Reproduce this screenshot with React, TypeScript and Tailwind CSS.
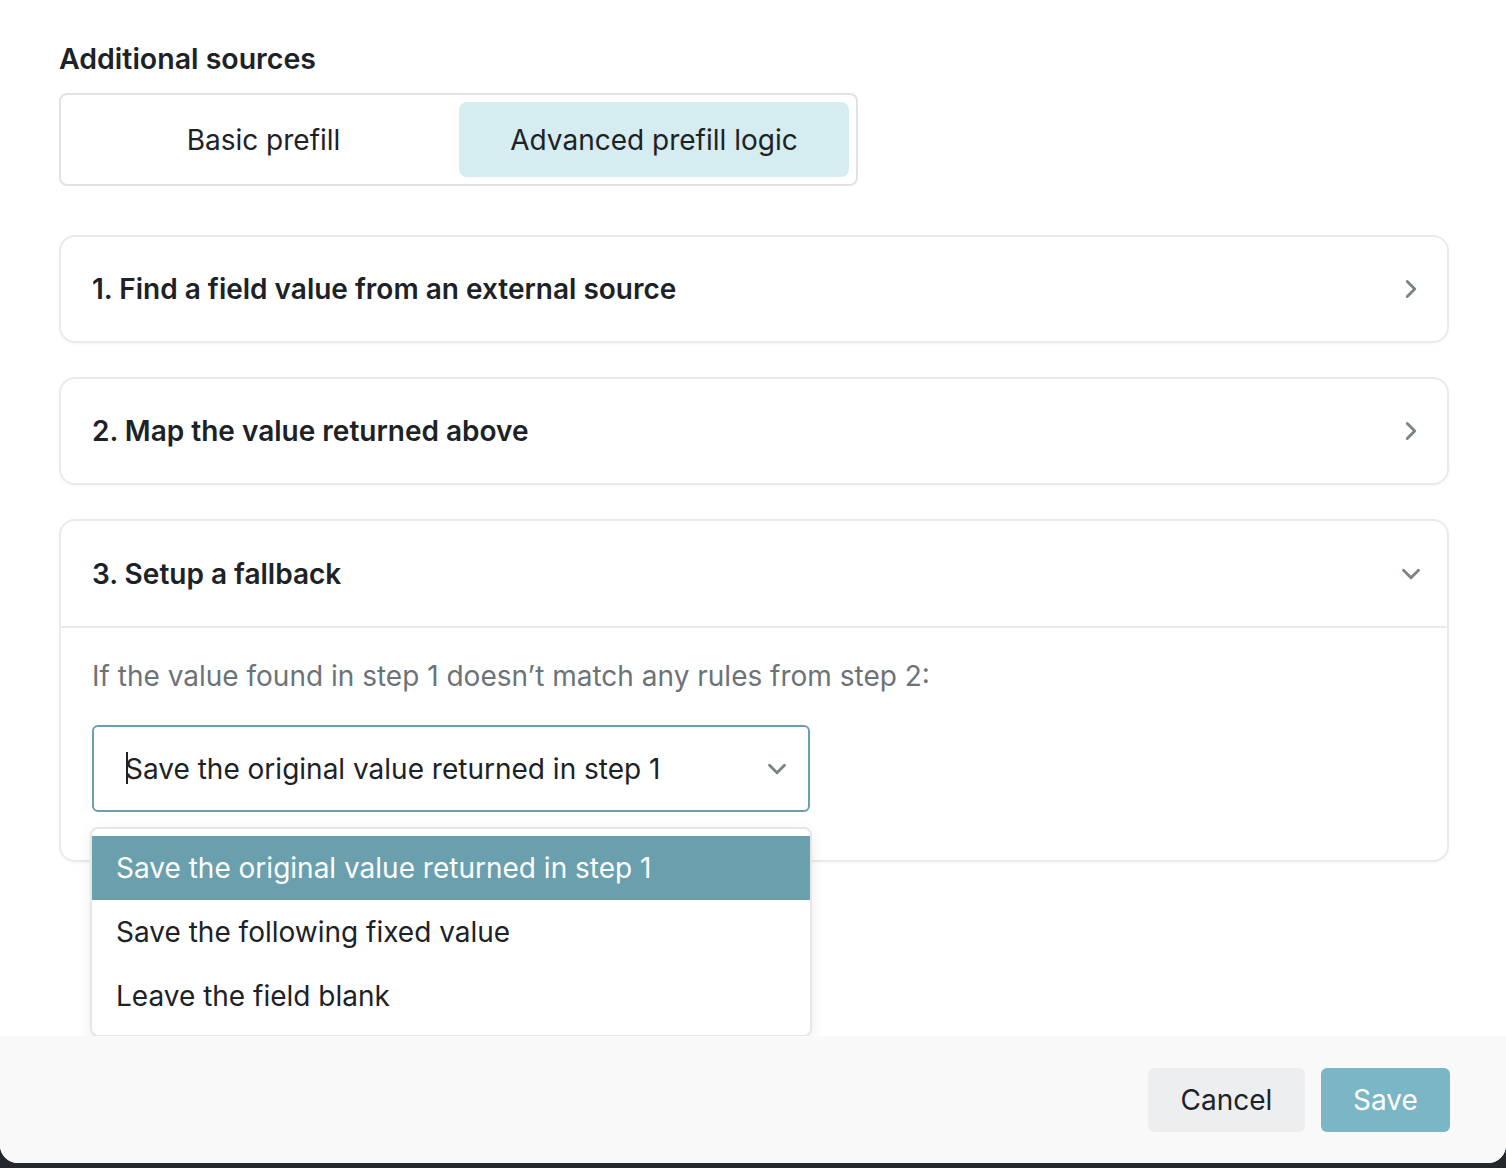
import React from "react";

function Chevron({ dir, className }: { dir: "right" | "down"; className?: string }) {
  return (
    <svg
      viewBox="0 0 24 24"
      width={30}
      height={30}
      fill="none"
      stroke="currentColor"
      strokeWidth={2.3}
      strokeLinecap="round"
      strokeLinejoin="round"
      className={className}
    >
      {dir === "right" ? <path d="m9 18 6-6-6-6" /> : <path d="m6 9 6 6 6-6" />}
    </svg>
  );
}

function CollapsedCard({ title }: { title: string }) {
  return (
    <div className="h-[108px] rounded-[16px] border-2 border-[#e8eaed] bg-white shadow-[0_1px_3px_rgba(0,0,0,0.04)] flex items-center justify-between pl-[31px] pr-[21px]">
      <span className="text-[28px] font-semibold text-[#1c2226]">{title}</span>
      <Chevron dir="right" className="text-[#7c8387]" />
    </div>
  );
}

export default function App() {
  return (
    <div
      className="w-[1506px] h-[1168px] bg-[#23282c] overflow-hidden"
      style={{ fontFamily: "Inter, 'Noto Sans', sans-serif" }}
    >
      <div className="h-[1163px] bg-white rounded-b-[18px] flex flex-col overflow-hidden">
        <div className="h-[1036px] pl-[59px] pt-[41px]">
          <div className="w-[1390px]">
            <h2 className="text-[28.5px] leading-[36px] font-semibold text-[#1c2226]">
              Additional sources
            </h2>
            <div className="mt-[16px] w-[799px] h-[93px] rounded-[8px] border-2 border-[#e0e3e6] p-[7px] flex gap-[10px]">
              <button className="w-[381px] h-full rounded-[8px] pl-[10px] text-[28px] text-[#1c2226]">
                Basic prefill
              </button>
              <button className="w-[390px] h-full rounded-[8px] bg-[#d5ecf1] text-[28px] text-[#1c2226]">
                Advanced prefill logic
              </button>
            </div>

            <div className="mt-[49px] flex flex-col gap-[34px]">
              <CollapsedCard title="1. Find a field value from an external source" />
              <CollapsedCard title="2. Map the value returned above" />

              <div className="rounded-[16px] border-2 border-[#e8eaed] bg-white shadow-[0_1px_3px_rgba(0,0,0,0.04)]">
                <div className="h-[107px] flex items-center justify-between pl-[31px] pr-[21px] border-b-2 border-[#e8eaed]">
                  <span className="text-[28px] font-semibold text-[#1c2226]">
                    3. Setup a fallback
                  </span>
                  <Chevron dir="down" className="text-[#7c8387]" />
                </div>
                <div className="pl-[31px] pt-[28px] pb-[48px]">
                  <p className="text-[28px] leading-[40px] text-[#6c7378]">
                    If the value found in step 1 doesn’t match any rules from step 2:
                  </p>
                  <div className="relative mt-[29px] w-[718px]">
                    <div className="h-[87px] rounded-[6px] border-2 border-[#6b9fae] flex items-center justify-between pl-[31px] pr-[16px]">
                      <span className="relative text-[28px] text-[#1c2226]">
                        <span className="absolute left-[1px] top-[4px] w-[2px] h-[32px] bg-[#1c2226]" />
                        Save the original value returned in step 1
                      </span>
                      <Chevron dir="down" className="text-[#7c8387]" />
                    </div>
                    <div className="absolute z-10 left-[-2px] right-[-2px] top-[102px] rounded-[8px] border-2 border-[#e6e6e6] bg-white shadow-[0_4px_14px_rgba(0,0,0,0.08)] py-[7px]">
                      <div className="h-[64px] bg-[#6a9fad] flex items-center pl-[24px] text-[28px] text-white">
                        Save the original value returned in step 1
                      </div>
                      <div className="h-[64px] flex items-center pl-[24px] text-[28px] text-[#1c2226]">
                        Save the following fixed value
                      </div>
                      <div className="h-[64px] flex items-center pl-[24px] text-[28px] text-[#1c2226]">
                        Leave the field blank
                      </div>
                    </div>
                  </div>
                </div>
              </div>
            </div>
          </div>
        </div>

        <div className="relative z-20 h-[127px] bg-[#f9f9f9] flex items-center justify-end gap-[16px] pr-[56px]">
          <button className="w-[157px] h-[64px] rounded-[6px] bg-[#edeef0] text-[28px] text-[#1c2226]">
            Cancel
          </button>
          <button className="w-[129px] h-[64px] rounded-[6px] bg-[#7ab6c5] text-[28px] text-white">
            Save
          </button>
        </div>
      </div>
    </div>
  );
}
